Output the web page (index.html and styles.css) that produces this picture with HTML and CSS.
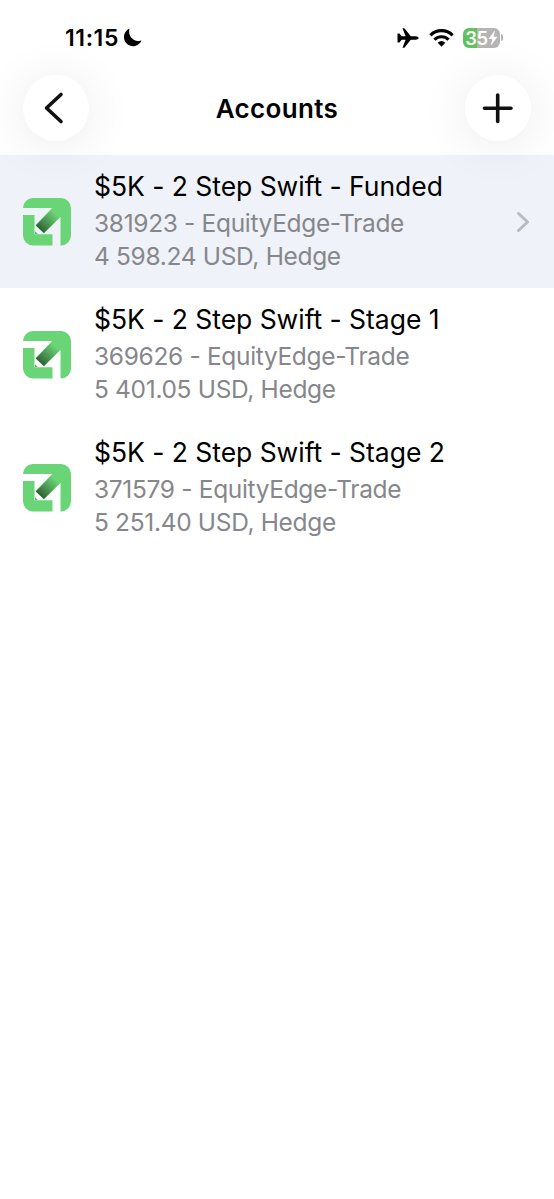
FILE: index.html
```html
<!DOCTYPE html>
<html lang="en">
<head>
<meta charset="utf-8">
<title>Accounts</title>
<link rel="stylesheet" href="styles.css">
</head>
<body>
<svg class="defs" width="0" height="0" aria-hidden="true">
  <defs>
    <linearGradient id="pen" gradientUnits="userSpaceOnUse" x1="15" y1="32" x2="32" y2="15">
      <stop offset="0" stop-color="#2a5530"/>
      <stop offset="0.35" stop-color="#438549"/>
      <stop offset="1" stop-color="#6ad576"/>
    </linearGradient>
    <symbol id="broker" viewBox="0 0 48 48">
      <rect width="48" height="47.500" rx="10" fill="#6ad576"/>
      <path class="cut" d="M-1 10H29.200L12.500 27L21 35.500L37.500 18.700V49H29.500V36.200H11.500V17H-1Z"/>
      <path d="M12.800 27.500L30 10L38 18L20.800 35Z" fill="url(#pen)"/>
      <path d="M12 33.200L14.800 36H12Z" fill="#6ea676"/>
    </symbol>
  </defs>
</svg>
<div class="screen">
  <div class="status">
    <div class="clock">
      <span class="time">11:15</span>
      <svg width="19" height="19" viewBox="0 0 19 19"><path d="M6.500 0.500A9.200 9.200 0 1 0 18.600 12.600C12.500 14.500 4.300 9.500 6.500 0.500Z"/></svg>
    </div>
    <div class="signals">
      <svg width="22" height="20" viewBox="0 0 22 20"><path d="M21.600 10C21.600 9 20 8.300 18.500 8.300H13.800L7.800 0.800Q7.400 0.300 6.800 0.300H5.500L8.600 8.300H4.600L2.500 5.600H0.500V14.400H2.500L4.600 11.700H8.600L5.500 19.700H6.800Q7.400 19.700 7.800 19.200L13.800 11.700H18.500C20 11.700 21.600 11 21.600 10Z"/></svg>
      <svg class="wifi" width="25" height="18" viewBox="0 0 25 18"><g fill="none" stroke="#000" stroke-width="3.200"><path d="M1.400 6.300A15.700 15.700 0 0 1 23.600 6.300"/><path d="M5.400 10.700A10 10 0 0 1 19.600 10.700"/></g><path d="M8.700 13.800A5.700 5.700 0 0 1 16.300 13.800L12.500 17.700Z"/></svg>
      <div class="battery">
        <span class="charge">35</span>
        <svg width="10" height="16" viewBox="0 0 10 16"><path d="M7 0.300L0.500 9H4.300L2.800 15.700L9.500 6.700H5.600Z" fill="#fff"/></svg>
      </div>
      <span class="nub"></span>
    </div>
  </div>
  <header class="bar">
    <button class="round" aria-label="Back"><svg width="66" height="66" viewBox="0 0 66 66"><path d="M38 19.500L23.500 33L38 46.500"/></svg></button>
    <h1>Accounts</h1>
    <button class="round" aria-label="Add"><svg width="66" height="66" viewBox="0 0 66 66"><path d="M32.700 20V46.500M19.500 33.200H46"/></svg></button>
  </header>
  <main class="list">
    <div class="row selected">
      <svg class="logo"><use href="#broker"/></svg>
      <div class="info">
        <div class="name">$5K - 2 Step Swift - Funded</div>
        <div class="sub">381923 - EquityEdge-Trade</div>
        <div class="sub">4 598.24 USD, Hedge</div>
      </div>
      <svg class="chevron" width="14" height="22" viewBox="0 0 14 22"><path d="M2.500 2.500L11.500 11L2.500 19.500"/></svg>
    </div>
    <div class="row">
      <svg class="logo"><use href="#broker"/></svg>
      <div class="info">
        <div class="name">$5K - 2 Step Swift - Stage 1</div>
        <div class="sub">369626 - EquityEdge-Trade</div>
        <div class="sub">5 401.05 USD, Hedge</div>
      </div>
    </div>
    <div class="row">
      <svg class="logo"><use href="#broker"/></svg>
      <div class="info">
        <div class="name">$5K - 2 Step Swift - Stage 2</div>
        <div class="sub">371579 - EquityEdge-Trade</div>
        <div class="sub">5 251.40 USD, Hedge</div>
      </div>
    </div>
  </main>
</div>
</body>
</html>
```
FILE: styles.css
```css
* { box-sizing: border-box; }
body { margin: 0; background: #fff; font-family: Inter, "Liberation Sans", sans-serif; color: #000; }
.defs { display: block; }
.screen { width: 554px; height: 1199px; overflow: hidden; background: #fff; }
.status { height: 75px; padding: 0 51px 0 65px; display: flex; justify-content: space-between; align-items: center; }
.clock, .signals { display: flex; align-items: center; }
.clock { gap: 4px; }
.time { font-size: 23px; font-weight: 600; letter-spacing: 0.6px; line-height: 28px; }
.wifi { margin: 0 9px 0 10px; }
.battery { width: 37px; height: 20px; border-radius: 6px; background: linear-gradient(90deg, #60c25d 14px, #b5b5b5 14px); display: flex; align-items: center; justify-content: center; }
.charge { color: #fff; font-size: 18.5px; font-weight: 600; line-height: 20px; letter-spacing: -0.5px; }
.nub { width: 2px; height: 7px; margin-left: 1px; border-radius: 0 2px 2px 0; background: #b5b5b5; }
.bar { height: 80px; padding: 0 23px; display: flex; justify-content: space-between; align-items: flex-start; }
.bar h1 { margin: 0; font-size: 26px; font-weight: 600; line-height: 67px; letter-spacing: 0.35px; }
.round { width: 66px; height: 66px; padding: 0; border: 0; border-radius: 50%; background: #fff; box-shadow: 0 4px 50px rgba(0, 0, 0, 0.09); }
.round svg { display: block; fill: none; stroke: #111; stroke-width: 3.6; stroke-linecap: round; stroke-linejoin: round; }
.row { height: 133px; padding: 0 24px 0 23px; display: flex; align-items: center; --cut: #fff; }
.selected { background: rgba(229, 235, 244, 0.63); --cut: #eff3f8; }
.logo { width: 48px; height: 48px; margin-right: 23px; flex: none; }
.cut { fill: var(--cut); }
.info { flex: 1; white-space: nowrap; padding-bottom: 5px; }
.name { font-size: 26.5px; line-height: 41px; letter-spacing: -0.04px; }
.sub { font-size: 24.5px; line-height: 32.5px; letter-spacing: -0.33px; color: #86878c; }
.chevron { fill: none; stroke: #b9bbc0; stroke-width: 3; stroke-linecap: round; stroke-linejoin: round; }
```
